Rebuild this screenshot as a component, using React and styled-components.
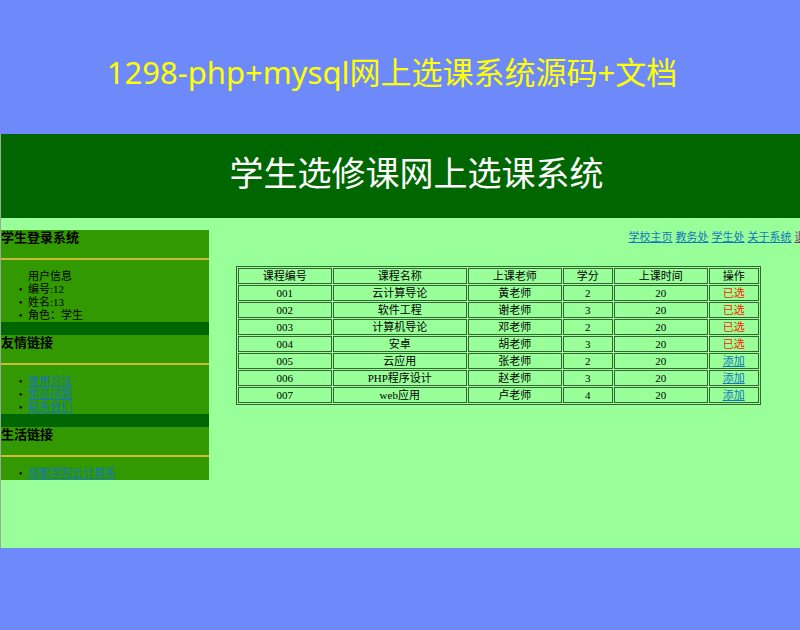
import styled, { createGlobalStyle } from 'styled-components';

const courses = [
  { id: '001', name: '云计算导论', teacher: '黄老师', credit: 2, time: 20, chosen: true },
  { id: '002', name: '软件工程', teacher: '谢老师', credit: 3, time: 20, chosen: true },
  { id: '003', name: '计算机导论', teacher: '邓老师', credit: 2, time: 20, chosen: true },
  { id: '004', name: '安卓', teacher: '胡老师', credit: 3, time: 20, chosen: true },
  { id: '005', name: '云应用', teacher: '张老师', credit: 2, time: 20, chosen: false },
  { id: '006', name: 'PHP程序设计', teacher: '赵老师', credit: 3, time: 20, chosen: false },
  { id: '007', name: 'web应用', teacher: '卢老师', credit: 4, time: 20, chosen: false },
];

const columns = [
  { title: '课程编号', width: 94 },
  { title: '课程名称', width: 134 },
  { title: '上课老师', width: 94 },
  { title: '学分', width: 50 },
  { title: '上课时间', width: 94 },
  { title: '操作', width: 50 },
];

export default function App() {
  return (
    <>
      <GlobalStyle />
      <PageTitle>1298-php+mysql网上选课系统源码+文档</PageTitle>
      <Site>
        <Banner>
          <h2>学生选修课网上选课系统</h2>
        </Banner>
        <Content>
          <Sidebar>
            <Panel>
              <h3>学生登录系统</h3>
              <ul>
                <li className='caption'>用户信息</li>
                <li>编号:12</li>
                <li>姓名:13</li>
                <li>角色：学生</li>
              </ul>
            </Panel>
            <Panel>
              <h3>友情链接</h3>
              <ul>
                <li><Link href='#usage'>使用方法</Link></li>
                <li><Link href='#faq'>常见问题</Link></li>
                <li><Link href='#contact'>联系我们</Link></li>
              </ul>
            </Panel>
            <Panel>
              <h3>生活链接</h3>
              <ul>
                <li><Link href='#college'>成都学院云计算系</Link></li>
              </ul>
            </Panel>
          </Sidebar>
          <Main>
            <TopNav>
              <Link href='#home'>学校主页</Link>
              <Link href='#academic'>教务处</Link>
              <Link href='#students'>学生处</Link>
              <Link href='#about'>关于系统</Link>
              <Link href='#logout' $visited>退出</Link>
            </TopNav>
            <CourseTable>
              <colgroup>
                {columns.map(({ title, width }) => <Column key={title} $width={width} />)}
              </colgroup>
              <thead>
                <tr>
                  {columns.map(({ title }) => <th key={title} scope='col'>{title}</th>)}
                </tr>
              </thead>
              <tbody>
                {courses.map((course) => (
                  <tr key={course.id}>
                    <td>{course.id}</td>
                    <td>{course.name}</td>
                    <td>{course.teacher}</td>
                    <td>{course.credit}</td>
                    <td>{course.time}</td>
                    <td>
                      {course.chosen ? <Chosen>已选</Chosen> : <Link href={`#add-${course.id}`}>添加</Link>}
                    </td>
                  </tr>
                ))}
              </tbody>
            </CourseTable>
          </Main>
        </Content>
      </Site>
    </>
  );
}

const GlobalStyle = createGlobalStyle`
  * {
    box-sizing: border-box;
    margin: 0;
    padding: 0;
  }

  body {
    background-color: #6E8AFA;
    font-family: 'Liberation Serif', 'Noto Sans CJK SC', serif;
    font-size: 11px;
    line-height: 13px;
    color: #000000;
  }
`;

const PageTitle = styled.h1`
  padding: 52px 16px 42px 0;
  font-family: 'Noto Sans', 'Noto Sans CJK SC', sans-serif;
  font-size: 31px;
  font-weight: 400;
  line-height: 40px;
  text-align: center;
  color: #FFFF00;
`;

const Site = styled.div`
  min-height: 414px;
  border-left: 1px solid #99AA99;
  background-color: #99FF99;
  overflow: hidden;
`;

const Banner = styled.header`
  padding: 21px 0 23px;
  background-color: #006600;
  text-align: center;

  h2 {
    padding-left: 32px;
    font-size: 34px;
    font-weight: 400;
    line-height: 40px;
    color: #FFFFFF;
  }
`;

const Content = styled.div`
  margin-top: 12px;
  display: flex;
  align-items: flex-start;
`;

const Sidebar = styled.aside`
  width: 26%;
  flex-shrink: 0;
  display: flex;
  flex-direction: column;
  gap: 13px;
  background-color: #006600;
`;

const Panel = styled.section`
  background-color: #339900;

  h3 {
    padding-bottom: 13px;
    border-bottom: 2px solid #CCBB33;
    font-size: 13px;
    line-height: 15px;
  }

  ul {
    padding: 10px 0 0 27px;
    list-style-type: '•\\2002';
  }

  .caption {
    list-style: none;
  }
`;

const Main = styled.main`
  min-width: 0;
  flex: 1;
`;

const TopNav = styled.nav`
  padding: 1px 0 0 71%;
  display: flex;
  gap: 3px;
  white-space: nowrap;
`;

const CourseTable = styled.table`
  width: calc(100% - 67px);
  margin: 22px 40px 0 27px;
  table-layout: fixed;
  border: 1px solid #336633;
  border-spacing: 1px;

  th,
  td {
    border: 1px solid #336633;
    font-weight: 400;
    line-height: 14px;
    text-align: center;
  }
`;

const Column = styled.col`
  width: ${props => props.$width}px;
`;

const Link = styled.a`
  color: ${props => props.$visited ? '#883377' : '#1177BB'};
`;

const Chosen = styled.span`
  color: #FF2200;
`;
